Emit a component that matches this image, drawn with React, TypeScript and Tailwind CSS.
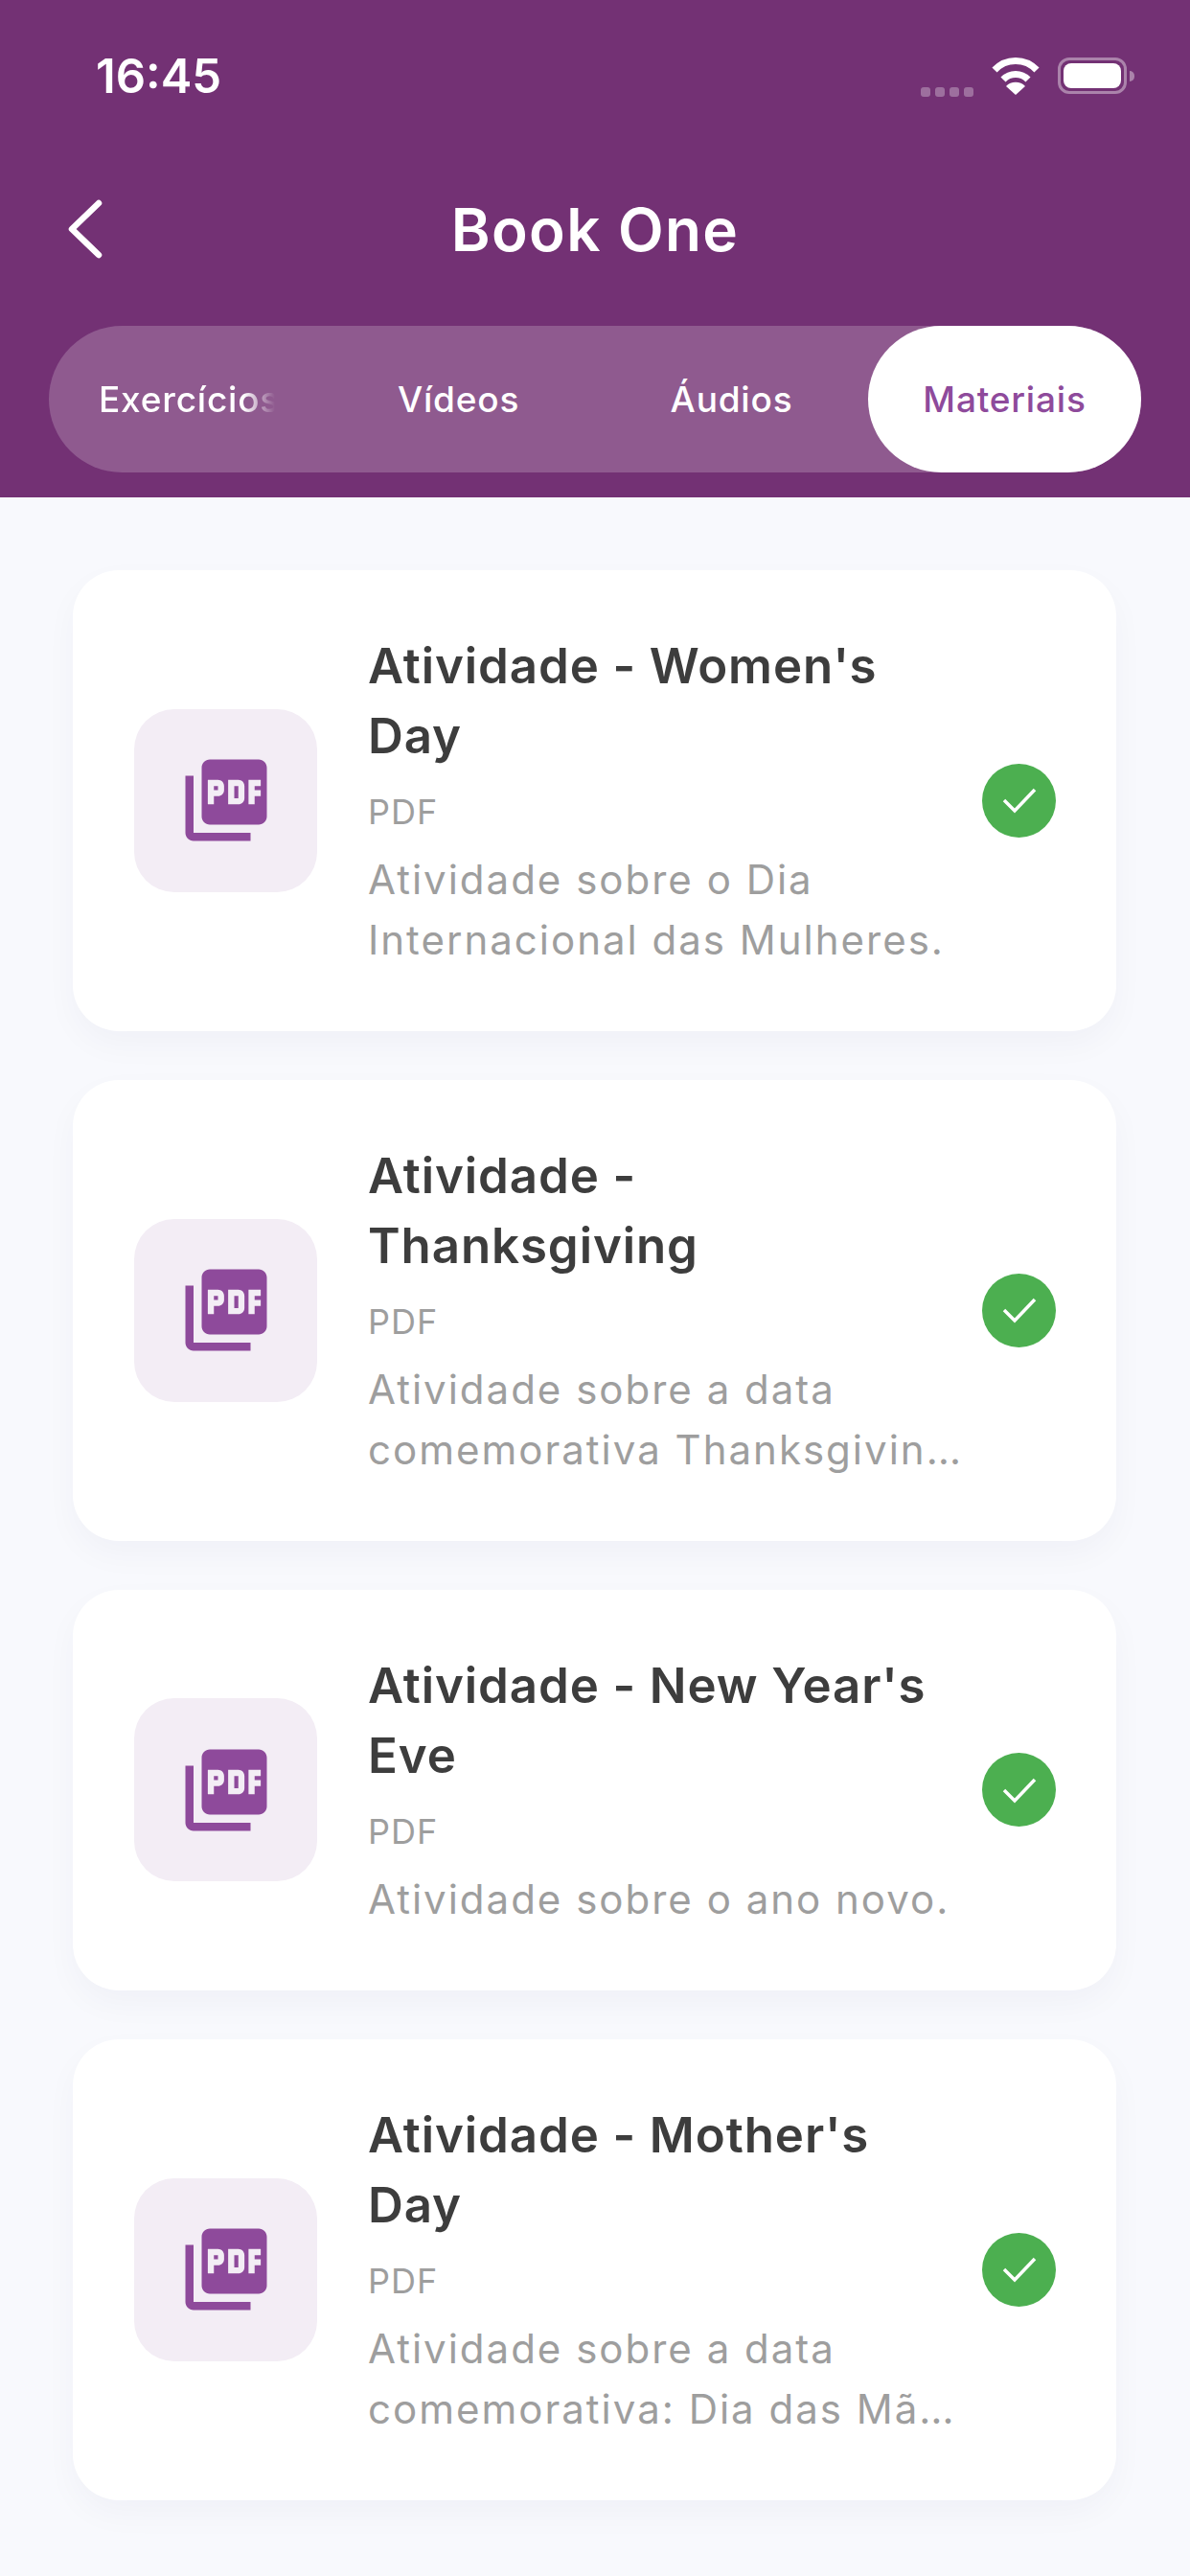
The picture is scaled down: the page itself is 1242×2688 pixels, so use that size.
import { FC } from "react";
import { MdPictureAsPdf } from "react-icons/md";

const materials = [
  {
    title: "Atividade - Women's Day",
    desc: "Atividade sobre o Dia Internacional das Mulheres.",
  },
  {
    title: "Atividade - Thanksgiving",
    desc: "Atividade sobre a data comemorativa Thanksgiving na cultura americana.",
  },
  {
    title: "Atividade - New Year's Eve",
    desc: "Atividade sobre o ano novo.",
  },
  {
    title: "Atividade - Mother's Day",
    desc: "Atividade sobre a data comemorativa: Dia das Mães na cultura americana.",
  },
];

const StatusBar: FC = () => (
  <div className="flex items-center justify-between h-[58px] mt-[50px] pl-[100px] pr-[58px]">
    <span className="text-[49px] font-semibold text-white leading-none">16:45</span>
    <div className="flex items-center">
      <div className="flex gap-[5px] mt-[34px] mr-[18px]">
        <div className="w-[10px] h-[10px] rounded-[3px] bg-white/30" />
        <div className="w-[10px] h-[10px] rounded-[3px] bg-white/30" />
        <div className="w-[10px] h-[10px] rounded-[3px] bg-white/30" />
        <div className="w-[10px] h-[10px] rounded-[3px] bg-white/30" />
      </div>
      <svg width="52" height="40" viewBox="0 0 52 40" className="mr-[18px]">
        <path d="M4 14 A30 30 0 0 1 48 14" fill="none" stroke="white" strokeWidth="7" />
        <path d="M13 24 A18 18 0 0 1 39 24" fill="none" stroke="white" strokeWidth="7" />
        <path d="M26 40 L16 31 A14 14 0 0 1 36 31 Z" fill="white" />
      </svg>
      <div className="w-[72px] h-[38px] rounded-[12px] border-[3px] border-white/40 p-[3px] flex">
        <div className="flex-1 rounded-[8px] bg-white" />
      </div>
      <div className="w-[5px] h-[11px] ml-[3px] rounded-r-full bg-white/40" />
    </div>
  </div>
);

const Tabs: FC = () => (
  <div className="flex h-[153px] mt-[41px] ml-[51px] mr-[51px] rounded-full bg-white/20 text-[37px] font-medium tracking-[0.8px]">
    <div className="w-[285px] flex items-center pl-[52px] text-white">
      <span className="w-[184px] overflow-hidden whitespace-nowrap [mask-image:linear-gradient(to_right,black_82%,transparent)]">
        Exercícios
      </span>
    </div>
    <div className="w-[285px] flex items-center justify-center text-white">Vídeos</div>
    <div className="w-[285px] flex items-center justify-center text-white">Áudios</div>
    <div className="w-[285px] flex items-center justify-center rounded-full bg-white text-[#8e4a9b]">
      Materiais
    </div>
  </div>
);

const MaterialCard: FC<{ title: string; desc: string }> = ({ title, desc }) => (
  <div className="flex items-center rounded-[48px] bg-white pl-[64px] pr-[63px] pt-[63px] pb-[64px] shadow-[0_14px_34px_rgba(40,40,90,0.035)]">
    <div className="flex items-center justify-center shrink-0 w-[191px] h-[191px] rounded-[42px] bg-[#f3edf5]">
      <MdPictureAsPdf className="text-[#8e4a9b] text-[102px]" />
    </div>
    <div className="flex-1 min-w-0 ml-[53px] mr-[8px]">
      <h3 className="text-[51px] leading-[73px] font-semibold text-[#3d3d3d] tracking-[0.9px] pr-[17px]">{title}</h3>
      <p className="mt-[20px] mb-[16px] text-[36px] leading-[46px] text-[#9e9e9e] tracking-[1px]">PDF</p>
      <p className="text-[42px] leading-[63px] text-[#9e9e9e] tracking-[2px] line-clamp-2">{desc}</p>
    </div>
    <div className="flex items-center justify-center shrink-0 w-[77px] h-[77px] rounded-full bg-[#4caf50]">
      <svg width="36" height="30" viewBox="0 0 36 30" fill="none" stroke="white" strokeWidth="3.5">
        <path d="M2 15 L13 26 L34 4" />
      </svg>
    </div>
  </div>
);

const App: FC = () => {
  return (
    <div className="min-h-screen bg-[#f8f9fd] font-['Inter',sans-serif]">
      <header className="bg-[#733174] h-[519px] overflow-hidden">
        <StatusBar />
        <div className="relative flex items-center justify-center h-[120px] mt-[71px]">
          <svg
            width="44"
            height="68"
            viewBox="0 0 44 68"
            fill="none"
            stroke="white"
            strokeWidth="6.5"
            strokeLinecap="round"
            strokeLinejoin="round"
            className="absolute left-[68px] top-[26px]"
          >
            <path d="M35 7 L7 34 L35 61" />
          </svg>
          <h1 className="text-[62px] font-semibold text-white tracking-[1.4px]">Book One</h1>
        </div>
        <Tabs />
      </header>
      <main className="flex flex-col gap-[51px] pt-[76px] pl-[76px] pr-[77px]">
        {materials.map((item, index) => (
          <MaterialCard key={index} title={item.title} desc={item.desc} />
        ))}
      </main>
    </div>
  );
};

export default App;
